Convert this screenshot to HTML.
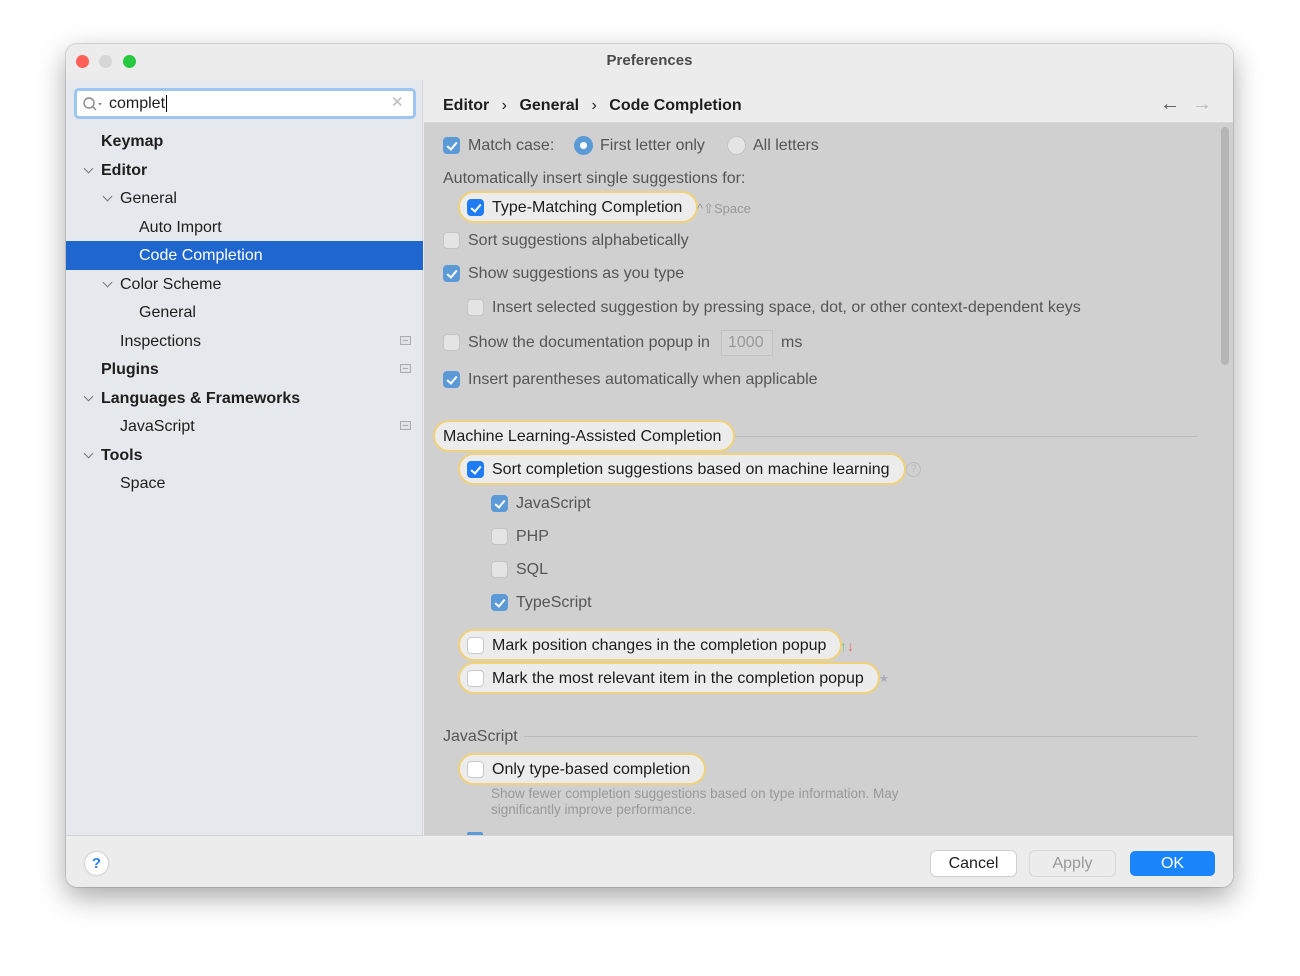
<!DOCTYPE html>
<html><head><meta charset="utf-8"><style>
*{margin:0;padding:0;box-sizing:border-box}
body{width:1300px;height:976px;background:#fff;font-family:"Liberation Sans",sans-serif;font-size:16px;position:relative;overflow:hidden;color:#1e1e1e}
.win{position:absolute;left:66px;top:44px;width:1167px;height:843px;border-radius:11px;background:#ececec;box-shadow:0 10px 28px rgba(0,0,0,.35),0 0 0 1px rgba(0,0,0,.12);overflow:hidden}
.a{position:absolute;white-space:nowrap;line-height:20px}
.side{position:absolute;left:0;top:36px;width:357px;height:755px;background:#e5e8ec;border-right:1px solid #d6d6d6}
.hdr{position:absolute;left:358px;top:36px;right:0;height:43px;background:#ececec;border-bottom:1px solid #d8d8d8}
.body{position:absolute;left:358px;top:79px;right:0;height:712px;background:#d0d0d0;overflow:hidden}
.foot{position:absolute;left:0;top:791px;right:0;height:52px;background:#ececec;border-top:1px solid #d4d4d4}
.cb{position:absolute;width:17px;height:17px;border-radius:4px;background:#e4e4e4;border:1px solid #c4c4c4}
.cb.on{background:#5b9ad6;border-color:#5b9ad6}
.cb.hl{background:#fff;border-color:#c9c9c9}
.cb.hl.on{background:#1f7cf3;border-color:#1f7cf3}
.cb.on:after{content:"";position:absolute;left:5px;top:2px;width:4px;height:8px;border:solid #fff;border-width:0 2px 2px 0;transform:rotate(40deg)}
.t{position:absolute;white-space:nowrap;color:#555;line-height:20px}
.pill{position:absolute;height:32px;border-radius:16px;background:#ececec;border:2px solid #f1d27a}
.pt{position:absolute;white-space:nowrap;color:#1c1c1c;line-height:20px}
.sb{font-weight:bold}
.chev{position:absolute;width:7px;height:7px;border:solid #777;border-width:0 1.5px 1.5px 0;transform:rotate(45deg)}
.ic{position:absolute;width:11px;height:9px;border:1px solid #a8acb2;background:#dfe2e6}
.ic:after{content:"";position:absolute;left:2px;top:3px;width:5px;height:1px;background:#a8acb2}
.btn{position:absolute;height:25px;border-radius:5px;text-align:center;line-height:25px;font-size:16px}
</style></head><body>
<div class="win">
 <div class="a" style="left:10px;top:11px;width:13px;height:13px;border-radius:50%;background:#fe5f57"></div>
 <div class="a" style="left:33px;top:11px;width:13px;height:13px;border-radius:50%;background:#d6d6d6"></div>
 <div class="a" style="left:57px;top:11px;width:13px;height:13px;border-radius:50%;background:#28c840"></div>
 <div class="a" style="left:0;width:1167px;top:7px;text-align:center;font-weight:bold;color:#4a4a4a;font-size:15px">Preferences</div>

 <div class="side">
  <div class="a" style="left:8px;top:8px;width:342px;height:31px;border-radius:5px;background:#fff;border:3px solid #9cc5f0"></div>
  <svg class="a" style="left:16px;top:16px" width="22" height="16"><circle cx="7" cy="7" r="5" fill="none" stroke="#888" stroke-width="1.4"/><line x1="10.5" y1="10.5" x2="14" y2="14" stroke="#888" stroke-width="1.4"/><path d="M16 7h4l-2 2.5z" fill="#888"/></svg>
  <div class="a" style="left:43px;top:14px;color:#1c1c1c">complet<span style="border-left:1px solid #000;margin-left:1px"></span></div>
  <div class="a" style="left:325px;top:13px;color:#bbb;font-size:15px">✕</div>
  <div class="a sb" style="left:35px;top:52px">Keymap</div>
  <div class="chev" style="left:19px;top:85px"></div><div class="a sb" style="left:35px;top:81px">Editor</div>
  <div class="chev" style="left:38px;top:113px"></div><div class="a" style="left:54px;top:109px">General</div>
  <div class="a" style="left:73px;top:138px">Auto Import</div>
  <div class="a" style="left:0;top:161px;width:357px;height:29px;background:#1f67cf"></div>
  <div class="a" style="left:73px;top:166px;color:#fff">Code Completion</div>
  <div class="chev" style="left:38px;top:199px"></div><div class="a" style="left:54px;top:195px">Color Scheme</div>
  <div class="a" style="left:73px;top:223px">General</div>
  <div class="a" style="left:54px;top:252px">Inspections</div><div class="ic" style="left:334px;top:256px"></div>
  <div class="a sb" style="left:35px;top:280px">Plugins</div><div class="ic" style="left:334px;top:284px"></div>
  <div class="chev" style="left:19px;top:313px"></div><div class="a sb" style="left:35px;top:309px">Languages &amp; Frameworks</div>
  <div class="a" style="left:54px;top:337px">JavaScript</div><div class="ic" style="left:334px;top:341px"></div>
  <div class="chev" style="left:19px;top:370px"></div><div class="a sb" style="left:35px;top:366px">Tools</div>
  <div class="a" style="left:54px;top:394px">Space</div>
 </div>

 <div class="hdr">
  <div class="a sb" style="left:19px;top:16px">Editor <span style="font-weight:normal;margin:0 8px">›</span> General <span style="font-weight:normal;margin:0 8px">›</span> Code Completion</div>
  <div class="a" style="left:736px;top:14px;font-size:20px;color:#555">←</div>
  <div class="a" style="left:768px;top:14px;font-size:20px;color:#bbb">→</div>
 </div>

 <div class="body">
  <div class="a" style="right:4px;top:4px;width:8px;height:238px;border-radius:4px;background:#b6b6b6"></div>
  <div class="cb on" style="left:19px;top:14px"></div><div class="t" style="left:44px;top:13px">Match case:</div>
  <div class="a" style="left:150px;top:13px;width:19px;height:19px;border-radius:50%;background:#5b9ad6"><div class="a" style="left:6px;top:6px;width:7px;height:7px;border-radius:50%;background:#fff"></div></div>
  <div class="t" style="left:176px;top:13px">First letter only</div>
  <div class="a" style="left:303px;top:13px;width:19px;height:19px;border-radius:50%;background:#e4e4e4;border:1px solid #c4c4c4"></div>
  <div class="t" style="left:329px;top:13px">All letters</div>
  <div class="t" style="left:19px;top:46px">Automatically insert single suggestions for:</div>
  <div class="pill" style="left:34px;top:68px;width:240px"></div>
  <div class="cb hl on" style="left:43px;top:76px"></div><div class="pt" style="left:68px;top:75px">Type-Matching Completion</div>
  <div class="t" style="left:273px;top:76px;font-size:13px;color:#999">^⇧Space</div>
  <div class="cb" style="left:19px;top:109px"></div><div class="t" style="left:44px;top:108px">Sort suggestions alphabetically</div>
  <div class="cb on" style="left:19px;top:142px"></div><div class="t" style="left:44px;top:141px">Show suggestions as you type</div>
  <div class="cb" style="left:43px;top:176px"></div><div class="t" style="left:68px;top:175px">Insert selected suggestion by pressing space, dot, or other context-dependent keys</div>
  <div class="cb" style="left:19px;top:211px"></div><div class="t" style="left:44px;top:210px">Show the documentation popup in</div>
  <div class="a" style="left:297px;top:207px;width:52px;height:26px;border:1px solid #c2c2c2;background:#d3d3d3;color:#999;line-height:24px;padding-left:6px">1000</div>
  <div class="t" style="left:357px;top:210px">ms</div>
  <div class="cb on" style="left:19px;top:248px"></div><div class="t" style="left:44px;top:247px">Insert parentheses automatically when applicable</div>

  <div class="a" style="left:300px;top:313px;width:474px;height:1px;background:#bcbcbc"></div>
  <div class="pill" style="left:9px;top:297px;width:302px"></div>
  <div class="pt" style="left:19px;top:304px">Machine Learning-Assisted Completion</div>
  <div class="pill" style="left:34px;top:330px;width:448px"></div>
  <div class="cb hl on" style="left:43px;top:338px"></div><div class="pt" style="left:68px;top:337px">Sort completion suggestions based on machine learning</div>
  <div class="a" style="left:482px;top:339px;width:15px;height:15px;border-radius:50%;border:1px solid #bbb;color:#bbb;font-size:11px;text-align:center;line-height:13px">?</div>
  <div class="cb on" style="left:67px;top:372px"></div><div class="t" style="left:92px;top:371px">JavaScript</div>
  <div class="cb" style="left:67px;top:405px"></div><div class="t" style="left:92px;top:404px">PHP</div>
  <div class="cb" style="left:67px;top:438px"></div><div class="t" style="left:92px;top:437px">SQL</div>
  <div class="cb on" style="left:67px;top:471px"></div><div class="t" style="left:92px;top:470px">TypeScript</div>
  <div class="pill" style="left:34px;top:539px;width:422px"></div>
  <div class="pill" style="left:34px;top:506px;width:384px"></div>
  <div class="cb hl" style="left:43px;top:514px"></div><div class="pt" style="left:68px;top:513px">Mark position changes in the completion popup</div>
  <div class="a" style="left:416px;top:513px;font-size:14px;font-weight:bold"><span style="color:#7c7">↑</span><span style="color:#e66">↓</span></div>
  <div class="cb hl" style="left:43px;top:547px"></div><div class="pt" style="left:68px;top:546px">Mark the most relevant item in the completion popup</div>
  <div class="a" style="left:455px;top:546px;font-size:11px;color:#aab">★</div>

  <div class="t" style="left:19px;top:604px">JavaScript</div>
  <div class="a" style="left:100px;top:613px;width:674px;height:1px;background:#bcbcbc"></div>
  <div class="pill" style="left:34px;top:630px;width:248px"></div>
  <div class="cb hl" style="left:43px;top:638px"></div><div class="pt" style="left:68px;top:637px">Only type-based completion</div>
  <div class="t" style="left:67px;top:663px;font-size:13.5px;color:#999;line-height:16px">Show fewer completion suggestions based on type information. May<br>significantly improve performance.</div>
  <div class="a" style="left:43px;top:709px;width:16px;height:4px;background:#5b9ad6;border-radius:2px 2px 0 0"></div>
 </div>

 <div class="foot">
  <div class="a" style="left:19px;top:16px;width:23px;height:23px;border-radius:50%;background:#fff;box-shadow:0 0 2px rgba(0,0,0,.3);color:#2a7ff0;font-weight:bold;text-align:center;line-height:23px;font-size:15px">?</div>
  <div class="btn" style="left:865px;top:15px;width:85px;background:#fff;box-shadow:0 0 0 1px #d0d0d0,0 1px 1px rgba(0,0,0,.1)">Cancel</div>
  <div class="btn" style="left:964px;top:15px;width:85px;background:#ececec;box-shadow:0 0 0 1px #d8d8d8;color:#999">Apply</div>
  <div class="btn" style="left:1064px;top:15px;width:85px;background:#1a84fb;color:#fff">OK</div>
 </div>
</div>
</body></html>
